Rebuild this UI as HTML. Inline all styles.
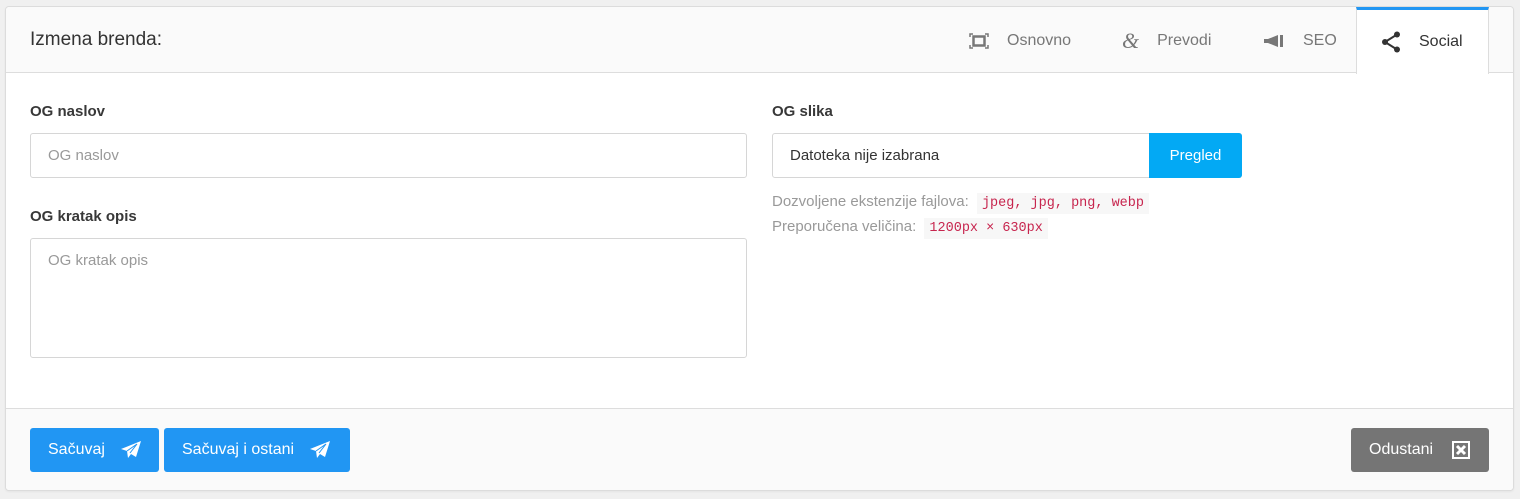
<!DOCTYPE html>
<html><head><meta charset="utf-8"><style>
*{box-sizing:border-box}
body{margin:0;width:1520px;height:499px;background:#f0f0f0;font-family:"Liberation Sans",Roboto,sans-serif;color:#333;overflow:hidden}
.card{position:absolute;left:5px;top:6px;width:1509px;height:485px;background:#fff;border:1px solid #dcdcdc;border-radius:4px;overflow:hidden;box-shadow:0 1px 2px rgba(0,0,0,.05)}
.hdr{position:absolute;left:0;top:0;right:0;height:66px;background:#fafafa;border-bottom:1px solid #ddd}
.title{position:absolute;left:24px;top:22px;font-size:19px;color:#333}
.tab{position:absolute;top:1px;height:66px;display:flex;align-items:center;font-size:16px;color:#777}
.tab svg{margin-right:18px}
.act{left:1350px;top:0;width:133px;background:#fff;border-top:3px solid #2196f3;border-left:1px solid #ddd;border-right:1px solid #ddd;height:67px;color:#333;padding-left:24px}
.lbl{position:absolute;font-size:15px;font-weight:bold;color:#383838}
.inp{position:absolute;border:1px solid #d6d6d6;border-radius:3px;font-size:15px;color:#999;padding-left:17px}
.hint{position:absolute;font-size:15px;color:#999}
code{font-family:"Liberation Mono",monospace;font-size:13.5px;color:#c7254e;background:#f7f7f7;padding:3px 5px;margin-left:4px}
.ftr{position:absolute;left:0;right:0;top:401px;bottom:0;background:#fafafa;border-top:1px solid #ddd}
.btn{position:absolute;top:19px;height:44px;border-radius:3px;background:#2196f3;color:#fff;font-size:16px;display:flex;align-items:center;padding-left:18px}
</style></head><body>
<div class="card">
<div class="hdr">
<div class="title">Izmena brenda:</div>
<div class="tab" style="left:963px"><svg width="20" height="18" viewBox="0 0 20 18"><path d="M1 5V2h3M16 2h3v3M19 13v3h-3M4 16H1v-3" fill="none" stroke="#777" stroke-width="1.5"/><rect x="4.5" y="4.5" width="11" height="9" fill="none" stroke="#777" stroke-width="2.5"/></svg>Osnovno</div>
<div class="tab" style="left:1116px"><span style="font-family:'Liberation Serif',serif;font-style:italic;font-size:22px;margin-right:18px;color:#777">&amp;</span>Prevodi</div>
<div class="tab" style="left:1257px"><svg width="22" height="14" viewBox="0 0 22 14"><path d="M1 5h4l10-4v12L5 9H1z" fill="#777"/><rect x="17" y="1" width="3" height="12" fill="#777"/></svg>SEO</div>
<div class="tab act"><svg width="20" height="22" viewBox="0 0 20 22"><circle cx="16" cy="3.5" r="3" fill="#333"/><circle cx="4" cy="11" r="3" fill="#333"/><circle cx="16" cy="18.5" r="3" fill="#333"/><path d="M16 3.5L4 11l12 7.5" fill="none" stroke="#333" stroke-width="2"/></svg>Social</div>
</div>
<div class="lbl" style="left:24px;top:96px">OG naslov</div>
<div class="inp" style="left:24px;top:126px;width:717px;height:45px;line-height:43px">OG naslov</div>
<div class="lbl" style="left:24px;top:201px">OG kratak opis</div>
<div class="inp" style="left:24px;top:231px;width:717px;height:120px;padding-top:13px">OG kratak opis</div>
<div class="lbl" style="left:766px;top:96px">OG slika</div>
<div class="inp" style="left:766px;top:126px;width:470px;height:45px;line-height:43px;color:#333">Datoteka nije izabrana
<div style="position:absolute;right:-1px;top:-1px;width:93px;height:45px;line-height:46px;background:#03a9f4;color:#fff;text-align:center;border-radius:0 3px 3px 0">Pregled</div></div>
<div class="hint" style="left:766px;top:186px">Dozvoljene ekstenzije fajlova: <code>jpeg, jpg, png, webp</code></div>
<div class="hint" style="left:766px;top:211px">Preporučena veličina: <code>1200px × 630px</code></div>
<div class="ftr">
<div class="btn" style="left:24px;width:129px">Sačuvaj<svg style="margin-left:16px" width="20" height="18" viewBox="0 0 20 18"><path d="M20 0L0 8l6 2 1 7 3-4 5 3z" fill="#fff"/><path d="M6 10l10-7-7 9" fill="none" stroke="#2196f3" stroke-width="1"/></svg></div>
<div class="btn" style="left:158px;width:186px">Sačuvaj i ostani<svg style="margin-left:16px" width="20" height="18" viewBox="0 0 20 18"><path d="M20 0L0 8l6 2 1 7 3-4 5 3z" fill="#fff"/><path d="M6 10l10-7-7 9" fill="none" stroke="#2196f3" stroke-width="1"/></svg></div>
<div class="btn" style="left:1345px;width:138px;background:#757575">Odustani<svg style="margin-left:18px" width="20" height="20" viewBox="0 0 20 20"><rect x="1" y="1" width="18" height="18" fill="#fff"/><rect x="3" y="3" width="14" height="14" fill="#757575"/><path d="M6 6l8 8M14 6l-8 8" stroke="#fff" stroke-width="3"/></svg></div>
</div>
</div>
</body></html>
